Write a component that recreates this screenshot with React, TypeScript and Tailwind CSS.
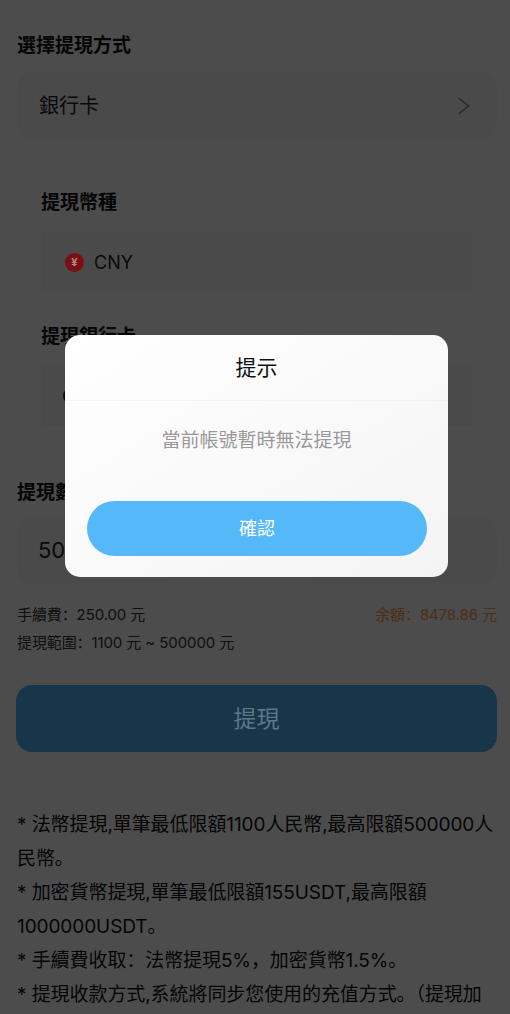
const font = { fontFamily: 'Inter, "Noto Sans CJK SC", "Noto Sans CJK TC", sans-serif' };

const notes = [
  '* 法幣提現,單筆最低限額1100人民幣,最高限額500000人民幣。',
  '* 加密貨幣提現,單筆最低限額155USDT,最高限額1000000USDT。',
  '* 手續費收取：法幣提現5%，加密貨幣1.5%。',
  '* 提現收款方式,系統將同步您使用的充值方式。（提現加',
];

function Label({ children }: { children: string }) {
  return <div className="text-[19px] leading-[28px] font-bold text-[#111]">{children}</div>;
}

export default function App() {
  return (
    <div className="relative h-[1014px] w-[510px] overflow-hidden bg-white" style={font}>
      <div className="pl-[17px] pr-[13px] pt-[32px]">
        <Label>選擇提現方式</Label>

        <div className="mt-[12px] flex h-[68px] items-center justify-between rounded-2xl bg-[#f7f7f7] pl-[22px] pr-[27px]">
          <span className="text-[20px] text-[#222]">銀行卡</span>
          <svg width="13" height="18" viewBox="0 0 13 18" fill="none" stroke="#888" strokeWidth="1.5">
            <path d="M1.5 1 11.5 9 1.5 17" />
          </svg>
        </div>

        <div className="mt-[49px] pl-[24px] pr-[25px]">
          <Label>提現幣種</Label>
          <div className="mt-[15px] flex h-[61px] items-center gap-[10px] bg-[#f7f7f7] pl-[24px]">
            <span className="relative z-10 flex h-[19px] w-[19px] items-center justify-center rounded-full bg-[#7a0f14] text-[11px] font-bold leading-none text-[#b08a8a]">
              ¥
            </span>
            <span className="text-[18px] text-[#222]">CNY</span>
          </div>

          <div className="mt-[30px]">
            <Label>提現銀行卡</Label>
          </div>
          <div className="mt-[14px] flex h-[61px] items-center bg-[#f7f7f7] pl-[22px]">
            <span className="h-[18px] w-[18px] rounded-full bg-[#222]" />
          </div>
        </div>

        <div className="mt-[53px]">
          <Label>提現數量</Label>
        </div>
        <div className="mt-[9px] flex h-[69px] items-center rounded-2xl bg-[#f7f7f7] pl-[21px] text-[22px] text-[#222]">
          500
        </div>

        <div className="mt-[20px] flex items-center justify-between text-[15px] leading-[20px] tracking-[-0.1px] text-[#333]">
          <span>手續費：250.00 元</span>
          <span className="text-[#ff9a50]">余額：8478.86 元</span>
        </div>
        <div className="mt-[8px] text-[15px] leading-[20px] tracking-[-0.1px] text-[#333]">
          提現範圍：1100 元 ~ 500000 元
        </div>

        <div className="-ml-px mt-[32px] flex h-[67px] items-center justify-center rounded-2xl bg-[#4db5f5] pt-[2px] text-[23px]">
          <span className="relative z-10 text-[#5a7888]">提現</span>
        </div>

        <div className="mt-[56px] text-[19px] leading-[34px] tracking-[-0.08px] text-[#111]">
          {notes.map((line) => (
            <div key={line}>{line}</div>
          ))}
        </div>
      </div>

      <div className="absolute inset-0 bg-black/70">
        <div className="absolute left-[65px] top-[335px] flex h-[242px] w-[383px] flex-col rounded-[15px] bg-gradient-to-br from-white to-[#f4f4f4]">
          <div className="flex h-[66px] items-center justify-center border-b border-[#f3f3f3] text-[21px] text-[#111]">
            提示
          </div>
          <div className="mt-[26px] text-center text-[19px] leading-[28px] text-[#999]">當前帳號暫時無法提現</div>
          <div className="ml-[22px] mt-[46px] flex h-[55px] w-[340px] items-center justify-center rounded-full bg-[#55b8f8] text-[18px] text-white">
            確認
          </div>
        </div>
      </div>
    </div>
  );
}
